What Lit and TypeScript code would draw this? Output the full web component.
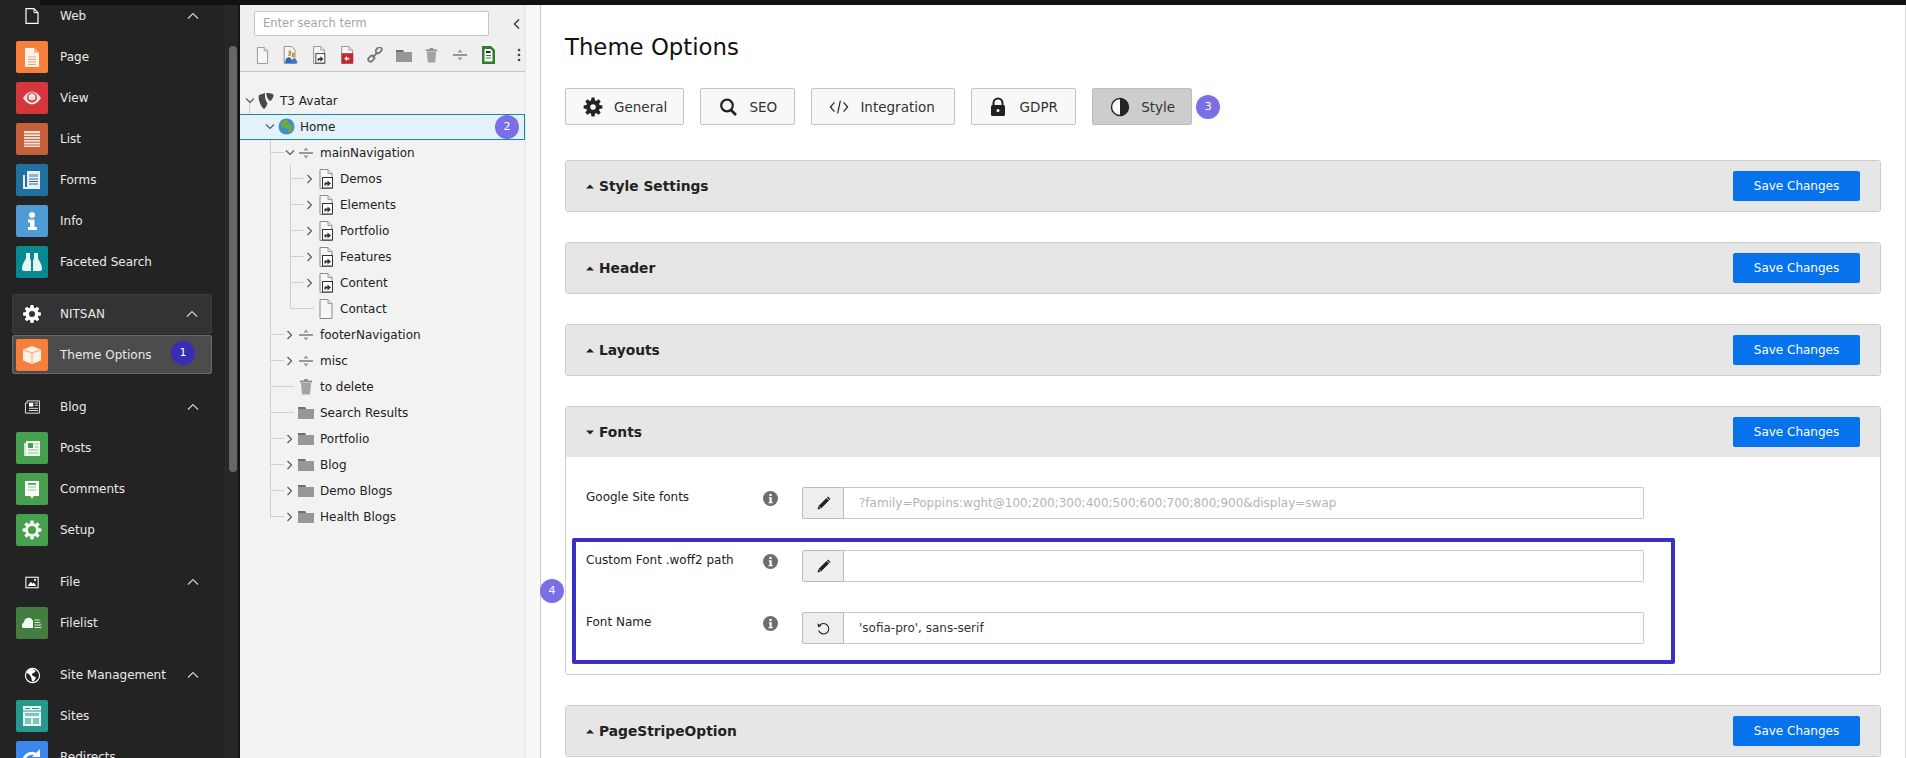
import { LitElement, html, svg, css } from "lit";
import { customElement } from "lit/decorators.js";

function gear(c: number, ro: number, ri: number, hole: number, teeth = 8) {
  let d = "";
  const step = (Math.PI * 2) / teeth;
  for (let i = 0; i < teeth; i++) {
    const a = i * step - step / 2;
    const pts: [number, number][] = [
      [ri, a + step * 0.12],
      [ro, a + step * 0.3],
      [ro, a + step * 0.7],
      [ri, a + step * 0.88],
    ];
    for (const [r, t] of pts) {
      d += `${d ? "L" : "M"}${(c + r * Math.cos(t)).toFixed(2)} ${(c + r * Math.sin(t)).toFixed(2)}`;
    }
  }
  d += "Z";
  d += `M${c - hole} ${c}a${hole} ${hole} 0 1 0 ${hole * 2} 0a${hole} ${hole} 0 1 0 ${-hole * 2} 0Z`;
  return d;
}

const chevUp = html`<svg class="chev" width="12" height="8" viewBox="0 0 12 8"><path d="M1 6.500 6 1.500l5 5" fill="none" stroke="#cfcfcf" stroke-width="1.200"/></svg>`;

// module icons, 32 box with own colour
const modIcons: Record<string, unknown> = {
  page: html`<svg viewBox="0 0 32 32"><rect width="32" height="32" rx="2" fill="#f6803a"/><path d="M9 7h9l5 5v14H9z" fill="#fdf3ea"/><path d="M18 7v5h5z" fill="#f9b68c"/><path d="M12 16h8M12 18.500h8M12 21h8M12 23.500h8" stroke="#f5a26c" stroke-width="1.100"/></svg>`,
  view: html`<svg viewBox="0 0 32 32"><rect width="32" height="32" rx="2" fill="#d5363b"/><path d="M7 16c3-4.500 6-6.500 9-6.500s6 2 9 6.500c-3 4.500-6 6.500-9 6.500S10 20.500 7 16z" fill="#fbe6e6"/><circle cx="16" cy="15.500" r="5" fill="#d5363b"/><circle cx="16" cy="15" r="3.600" fill="#f7dcdc"/></svg>`,
  list: html`<svg viewBox="0 0 32 32"><rect width="32" height="32" rx="2" fill="#c4603a"/><path d="M8 8h16v16H8z" fill="#f7e2d6"/><path d="M8 10.800h16M8 13.600h16M8 16.400h16M8 19.200h16M8 22h16" stroke="#c4603a" stroke-width="1"/></svg>`,
  forms: html`<svg viewBox="0 0 32 32"><rect width="32" height="32" rx="2" fill="#21709f"/><path d="M11 7h13v18H7V11h2v12h2z" fill="#e6f0f6"/><path d="M13 10h9v3h-9z" fill="#8fb6cf"/><path d="M13 15h9M13 17.500h9M13 20h9" stroke="#21709f" stroke-width="1.100"/></svg>`,
  info: html`<svg viewBox="0 0 32 32"><rect width="32" height="32" rx="2" fill="#4f9bd5"/><circle cx="16" cy="10" r="3" fill="#fff"/><path d="M12 14.500h6.500V22H21v3H12v-3h2v-4.500h-2z" fill="#fff"/></svg>`,
  faceted: html`<svg viewBox="0 0 32 32"><rect width="32" height="32" rx="2" fill="#048a90"/><path d="M10 7h4v5l1 3v10H8c-1.500 0-2-1-2-2 0-5 3-8 4-11zM22 7h-4v5l-1 3v10h7c1.500 0 2-1 2-2 0-5-3-8-4-11z" fill="#e8f5f5"/></svg>`,
  theme: html`<svg viewBox="0 0 32 32"><rect width="32" height="32" rx="2" fill="#f6803a"/><path d="M16 7l9 3.500v11L16 25l-9-3.500v-11z" fill="#fdf0e6"/><path d="M7 10.500l9 3.500 9-3.500M16 14v11" stroke="#f6a56f" stroke-width="1" fill="none"/></svg>`,
  posts: html`<svg viewBox="0 0 32 32"><rect width="32" height="32" rx="2" fill="#47a04d"/><path d="M10 9h14v15H10z" fill="#f2f8f2"/><path d="M8 11v13h2V11z" fill="#cfe6d0"/><path d="M12 11h5v5h-5z" fill="#47a04d"/><path d="M18.500 12h4M18.500 15h4M12 18h10.500M12 21h10.500" stroke="#8cc48f" stroke-width="1.100"/></svg>`,
  comments: html`<svg viewBox="0 0 32 32"><rect width="32" height="32" rx="2" fill="#47a04d"/><path d="M9 8h14v15h-5l-2 2.500-2-2.500H9z" fill="#f7fbf7"/><path d="M12 11h8" stroke="#2f5f32" stroke-width="1.200"/><path d="M12 14h8M12 17h8" stroke="#8cc48f" stroke-width="1.100"/></svg>`,
  setup: html`<svg viewBox="0 0 32 32"><rect width="32" height="32" rx="2" fill="#47a04d"/><path fill-rule="evenodd" d="${gear(16, 9.5, 6.8, 4)}" fill="#f2f8f2"/></svg>`,
  filelist: html`<svg viewBox="0 0 32 32"><rect width="32" height="32" rx="2" fill="#437d3f"/><path d="M7 21c-1.500-1-1.500-5 1-5.500 0-3.500 3.500-5.500 6-4.500 1.500.5 2.500 1.500 3 3v7z" fill="#f2f8f2"/><path d="M18.500 13h5M18.500 15.500h6M18.500 18h7M18.500 20.500h7" stroke="#d8ead6" stroke-width="1.100"/></svg>`,
  sites: html`<svg viewBox="0 0 32 32"><rect width="32" height="32" rx="2" fill="#259a8c"/><path d="M7 6h18v20H7z" fill="#eaf6f4"/><path d="M7 11h18" stroke="#259a8c"/><path d="M9 8.500h5M16 8.500h7" stroke="#259a8c" stroke-width="1"/><path d="M9 13h14v3H9zM9 18h6v6H9zM17 18h6v6h-6z" fill="#259a8c" opacity=".55"/></svg>`,
  redirects: html`<svg viewBox="0 0 32 32"><rect width="32" height="32" rx="2" fill="#3a88ef"/><path d="M8 20a8 8 0 0 1 13.500-5.500" stroke="#fff" stroke-width="3" fill="none"/><path d="M24 8v8h-8z" fill="#fff"/></svg>`,
};

const headIcons: Record<string, unknown> = {
  web: html`<svg width="14" height="16" viewBox="0 0 14 16"><path d="M1 .7h8l4 4v10.600H1z" fill="none" stroke="#fff" stroke-width="1.200"/><path d="M9 .7v4h4" fill="none" stroke="#fff" stroke-width="1"/></svg>`,
  nitsan: html`<svg width="20" height="20" viewBox="0 0 20 20"><path fill-rule="evenodd" d="${gear(10, 9, 6.5, 3)}" fill="#fff"/></svg>`,
  blog: html`<svg width="16" height="14" viewBox="0 0 18 16"><path d="M3.500 1h14v14h-16V3.500h2z" fill="none" stroke="#fff" stroke-width="1"/><path d="M5.500 3h5v4.500h-5z" fill="#fff"/><path d="M12 3.500h4M12 6h4M5.500 9.500h10.500M5.500 12h10.500" stroke="#fff"/></svg>`,
  file: html`<svg width="14" height="13" viewBox="0 0 16 14"><rect x="1" y="1" width="14" height="12" fill="none" stroke="#fff" stroke-width="1.200"/><path d="M3 11l3.500-5 2 2.500 1.500-1.500 3 4z" fill="#fff"/><circle cx="11.500" cy="4" r="1.200" fill="#fff"/></svg>`,
  site: html`<svg width="17" height="17" viewBox="0 0 18 18"><circle cx="9" cy="9" r="7.500" fill="none" stroke="#fff" stroke-width="1.200"/><path d="M7 2c-2 1-3.500 2-4 4 1 1 3 1.500 3.500 3 .5 1.500 1.500 2 1.500 4 .5 1.500 1 2.500 1.500 2.500 1.500-1 3-3 3-4.500-1-1-2.500-1-3.500-2s-.5-2 .5-2.500c1-1 2-.5 2.500-1.500C13 4 11 2 7 2z" fill="#fff"/></svg>`,
};

const groups = [
  { name: "Web", icon: "web", items: [["Page", "page"], ["View", "view"], ["List", "list"], ["Forms", "forms"], ["Info", "info"], ["Faceted Search", "faceted"]] },
  { name: "NITSAN", icon: "nitsan", boxed: true, items: [["Theme Options", "theme"]] },
  { name: "Blog", icon: "blog", items: [["Posts", "posts"], ["Comments", "comments"], ["Setup", "setup"]] },
  { name: "File", icon: "file", items: [["Filelist", "filelist"]] },
  { name: "Site Management", icon: "site", items: [["Sites", "sites"], ["Redirects", "redirects"]] },
];

const pageOutline = svg`<path d="M1 .5h8l4 4v15H1z" fill="#f6f6f6" stroke="#8a8a8a" stroke-width="1"/><path d="M9 .5v4h4" fill="#e4e4e4" stroke="#8a8a8a" stroke-width=".8"/>`;
const shortcutBadge = svg`<rect x="3.500" y="8.500" width="10" height="10.500" fill="#fff" stroke="#333"/><path d="M5.500 16.500v-3H8.500V11.500l3.500 3-3.500 3v-2H7v1z" fill="#333"/>`;

const treeIcons: Record<string, unknown> = {
  logo: html`<svg width="20" height="20" viewBox="0 0 20 20"><path d="M3 4 9 2c-.5 3 .5 8 2.500 10.500-1 3-2.500 5-3.500 5.500C5 16 1.500 8 3 4z" fill="#4a4a4a"/><path d="M10.500 2c3 0 6.500 .5 7 2 0 2.500-2 5.500-3.500 6C12 9 10 5 10.500 2z" fill="#4a4a4a"/></svg>`,
  globe: html`<svg width="17" height="17" viewBox="0 0 17 17"><circle cx="8.500" cy="8.500" r="8" fill="#3f8fcf"/><path d="M3 5c2-3 5-4 7-3 1 1-1 2.500 0 3.500s3 0 4.500 2c.5 3-2 6-3.500 7-1.500-1-1-3-2.500-4S5 10 4 9 2.500 6.500 3 5z" fill="#6fa83e"/></svg>`,
  div: html`<svg width="14" height="14" viewBox="0 0 14 14"><path d="M0 7h14" stroke="#666" stroke-width="1.300"/><path d="M4.500 4.500 7 1.500l2.500 3zM4.500 9.500 7 12.500l2.500-3z" fill="#999"/></svg>`,
  shortcut: html`<svg width="14" height="20" viewBox="0 0 14 20">${pageOutline}${shortcutBadge}</svg>`,
  page: html`<svg width="14" height="20" viewBox="0 0 14 20">${pageOutline}</svg>`,
  trash: html`<svg width="14" height="17" viewBox="0 0 14 17"><path d="M2 5h10l-1 11.500H3z" fill="#a3a3a3"/><path d="M1 2.500h12V4.500H1z" fill="#8f8f8f"/><path d="M5 1h4v2H5z" fill="#8f8f8f"/></svg>`,
  folder: html`<svg width="16" height="13" viewBox="0 0 16 13"><path d="M0 1h7l1 2h8v10H0z" fill="#979797"/><path d="M0 1h7l1 2H0z" fill="#6f6f6f"/></svg>`,
};

const tree = [
  ["T3 Avatar", 0, "open", "logo"],
  ["Home", 1, "open", "globe"],
  ["mainNavigation", 2, "open", "div"],
  ["Demos", 3, "closed", "shortcut"],
  ["Elements", 3, "closed", "shortcut"],
  ["Portfolio", 3, "closed", "shortcut"],
  ["Features", 3, "closed", "shortcut"],
  ["Content", 3, "closed", "shortcut"],
  ["Contact", 3, "", "page"],
  ["footerNavigation", 2, "closed", "div"],
  ["misc", 2, "closed", "div"],
  ["to delete", 2, "", "trash"],
  ["Search Results", 2, "", "folder"],
  ["Portfolio", 2, "closed", "folder"],
  ["Blog", 2, "closed", "folder"],
  ["Demo Blogs", 2, "closed", "folder"],
  ["Health Blogs", 2, "closed", "folder"],
] as [string, number, string, string][];

const tools = [
  html`<svg width="13" height="17" viewBox="0 0 14 20">${pageOutline}</svg>`,
  html`<svg width="15" height="18" viewBox="0 0 16 20"><path d="M1 .5h8l4 4v15H1z" fill="#f6f6f6" stroke="#888"/><path d="M6 5v4l-1 2 3 0 1-6zM10 7l-1 5 3 1 1-5z" fill="#c9953f"/><path d="M2 19c0-4 1.500-6.500 4-6.500s3 1.500 3.500 6.500z" fill="#2f66b5"/><path d="M8 19.500c0-3 1.500-5.500 3.500-5.500s4 2 4 5.500z" fill="#3f76c5"/></svg>`,
  html`<svg width="14" height="18" viewBox="0 0 14 20">${pageOutline}${shortcutBadge}</svg>`,
  html`<svg width="14" height="18" viewBox="0 0 14 20">${pageOutline}<rect x="1" y="8" width="13" height="11.500" fill="#c3262e"/><path d="M9.500 13H7v-2l-3 3 3 3v-2h2.500z" fill="#fff"/></svg>`,
  html`<svg width="16" height="16" viewBox="0 0 16 16"><g fill="none" stroke="#777" stroke-width="1.800"><rect x="8.500" y="1" width="6.500" height="4.500" rx="2" transform="rotate(-45 11.700 3.200)"/><rect x="1" y="9.500" width="6.500" height="4.500" rx="2" transform="rotate(-45 4.200 11.700)"/><path d="M5.500 10.500l5-5"/></g></svg>`,
  html`<svg width="16" height="13" viewBox="0 0 16 13"><path d="M0 1h7l1 2h8v10H0z" fill="#979797"/><path d="M0 1h7l1 2H0z" fill="#6f6f6f"/></svg>`,
  html`<svg width="13" height="16" viewBox="0 0 14 17"><path d="M2 5h10l-1 11.500H3z" fill="#a3a3a3"/><path d="M1 2.500h12V4.500H1z" fill="#8f8f8f"/><path d="M5 1h4v2H5z" fill="#8f8f8f"/></svg>`,
  html`<svg width="14" height="14" viewBox="0 0 14 14"><path d="M0 7h14" stroke="#666" stroke-width="1.300"/><path d="M4.500 4.500 7 1.500l2.500 3zM4.500 9.500 7 12.500l2.500-3z" fill="#999"/></svg>`,
  html`<svg width="13" height="18" viewBox="0 0 13 18"><path d="M0 0h9l4 4v14H0z" fill="#2d7d32"/><path d="M2.500 3h6l2 2v10.500h-8z" fill="#fff"/><path d="M4 5h4.500v2H4z" fill="#222"/><path d="M4 9h5v1.100H4zM4 11.500h5v1.100H4z" fill="#2d7d32"/></svg>`,
  html`<svg width="4" height="14" viewBox="0 0 4 14"><circle cx="2" cy="2" r="1.300" fill="#444"/><circle cx="2" cy="7" r="1.300" fill="#444"/><circle cx="2" cy="12" r="1.300" fill="#444"/></svg>`,
];

const tabs = [
  ["General", 119.4, html`<svg width="20" height="20" viewBox="0 0 20 20"><path fill-rule="evenodd" d="${gear(10, 9.5, 6.8, 2.8)}" fill="#222"/></svg>`],
  ["SEO", 95, html`<svg width="20" height="18" viewBox="0 0 20 18"><circle cx="9" cy="7.500" r="5.800" fill="none" stroke="#222" stroke-width="2.200"/><path d="M13 12l5 5" stroke="#222" stroke-width="2.600"/></svg>`],
  ["Integration", 143.2, html`<svg width="22" height="18" viewBox="0 0 22 18"><path d="M6 4 1.500 9 6 14M16 4l4.500 5L16 14M12.500 2l-3 14" fill="none" stroke="#222" stroke-width="1.300"/></svg>`],
  ["GDPR", 105.6, html`<svg width="20" height="20" viewBox="0 0 20 20"><g transform="translate(-3 0)"><path d="M7.500 9V6a4.500 4.500 0 0 1 9 0v3" fill="none" stroke="#222" stroke-width="2"/><rect x="5" y="8" width="14" height="11" rx="1.500" fill="#222"/><circle cx="12" cy="13.500" r="1.500" fill="#fff"/></g></svg>`],
  ["Style", 100, html`<svg width="20" height="20" viewBox="0 0 20 20"><circle cx="10" cy="10" r="8.500" fill="#fff" stroke="#222" stroke-width="1.400"/><path d="M10 1.500a8.500 8.500 0 0 1 0 17z" fill="#222"/></svg>`, true],
] as [string, number, unknown, boolean?][];

const triUp = html`<svg class="tri" width="8" height="5" viewBox="0 0 8 5"><path d="M0 4.500 4 .5l4 4z" fill="#222"/></svg>`;
const triDown = html`<svg class="tri" width="8" height="5" viewBox="0 0 8 5"><path d="M0 .5h8L4 4.500z" fill="#222"/></svg>`;
const info = html`<svg class="info" width="15" height="15" viewBox="0 0 15 15"><circle cx="7.500" cy="7.500" r="7.500" fill="#6d6d6d"/><circle cx="7.500" cy="4" r="1.300" fill="#fff"/><path d="M5.800 6.200h2.900V11h1v1.200H5.600V11h1V7.400h-.8z" fill="#fff"/></svg>`;
const pencil = html`<svg width="15" height="15" viewBox="0 0 15 15"><path d="M10.500 2 13 4.500 5 12.500l-3.500 1 1-3.500z" fill="#222"/><path d="M11.500 1l2.500 2.500" stroke="#222" stroke-width="1.500"/><path d="M3 10.500l2 2" stroke="#fff" stroke-width=".8"/></svg>`;
const undo = html`<svg width="15" height="15" viewBox="0 0 15 15"><path d="M3.500 4.500a5.200 5.200 0 1 1-.8 5" fill="none" stroke="#222" stroke-width="1.100"/><path d="M1.500 2.200l.5 4 3.500-1.200z" fill="#222"/></svg>`;

@customElement("app-root")
export class AppRoot extends LitElement {
  static styles = css`
    :host {
      display: block;
      position: relative;
      width: 1906px;
      height: 758px;
      overflow: hidden;
      font-family: "DejaVu Sans", Verdana, sans-serif;
      background: #fff;
    }
    .topbar {
      position: absolute;
      left: 40px;
      right: 0;
      top: 0;
      height: 5px;
      background: #111;
      z-index: 5;
    }
    .page {
      display: flex;
      height: 758px;
    }

    /* module menu */
    .sidebar {
      width: 240px;
      flex: none;
      display: flex;
      background: #232323;
      color: #e9e9e9;
      overflow: hidden;
    }
    .menu {
      width: 200px;
      margin: -4px 13px 0 12px;
      flex: none;
    }
    .group {
      padding-bottom: 11px;
    }
    .ghead {
      height: 40px;
      display: flex;
      align-items: center;
      padding-left: 4px;
      padding-right: 13px;
      box-sizing: border-box;
      font-size: 12px;
      border-radius: 3px;
    }
    .boxed .ghead {
      background: #333;
      border: 1px solid #3d3d3d;
      padding-left: 3px;
    }
    .hicon {
      width: 32px;
      display: flex;
      justify-content: center;
      margin-right: 12px;
    }
    .chev {
      margin-left: auto;
    }
    .items {
      padding-top: 1px;
    }
    .item {
      height: 39px;
      box-sizing: border-box;
      margin-bottom: 2px;
      padding: 4px 4px 3px;
      display: flex;
      align-items: flex-start;
      gap: 12px;
      font-size: 12px;
      position: relative;
      border-radius: 3px;
    }
    .item span {
      line-height: 32px;
    }
    .item svg {
      width: 32px;
      height: 32px;
      flex: none;
    }
    .item.sel {
      background: #4c4c4c;
      box-shadow: inset 0 0 0 1px #6a6a6a;
    }
    .badge {
      position: absolute;
      width: 24px;
      height: 24px;
      border-radius: 50%;
      background: #7b6fe6;
      color: #fff;
      font-size: 11px;
      line-height: 24px;
      text-align: center;
    }
    .badge.dark {
      background: #3a2db5;
      left: 159px;
      top: 6px;
    }
    .scroll {
      width: 15px;
      padding-top: 46px;
      background: #262626;
      box-sizing: border-box;
      padding-left: 3px;
      border-left: 1px solid #2e2e2e;
      border-right: 2px solid #151515;
    }
    .thumb {
      width: 8px;
      height: 426px;
      border-radius: 4px;
      background: #666;
    }

    /* page tree */
    .treepanel {
      width: 285px;
      flex: none;
      margin-top: 5px;
      background: #f2f2f2;
      border-right: 1px solid #e4e4e4;
      display: flex;
      flex-direction: column;
    }
    .tbar {
      height: 67px;
      flex: none;
      box-sizing: border-box;
      background: #efefef;
      border-bottom: 1px solid #c4c4c4;
      padding: 6px 0 0 14px;
    }
    .searchrow {
      display: flex;
      align-items: center;
      height: 25px;
    }
    .search {
      width: 235px;
      height: 25px;
      box-sizing: border-box;
      background: #fff;
      border: 1px solid #c4c4c4;
      border-radius: 2px;
      padding-left: 8px;
      font-size: 11.500px;
      line-height: 23px;
      color: #a5a5a5;
    }
    .collapse {
      margin-left: 24px;
    }
    .tools {
      display: flex;
      align-items: center;
      margin: 9px 0 0 -6px;
      height: 20px;
    }
    .tool {
      width: 28.300px;
      flex: none;
      display: flex;
      justify-content: center;
    }
    .tool:last-child {
      margin-left: 2px;
    }
    .treebody {
      position: relative;
      padding-top: 15.500px;
      flex: 1;
    }
    .lines {
      position: absolute;
      left: 0;
      top: 0;
      pointer-events: none;
    }
    .row {
      position: relative;
      height: 26px;
      box-sizing: border-box;
      display: flex;
      align-items: center;
      font-size: 12px;
      color: #222;
    }
    .row.sel {
      background: #e3f1f9;
      border-top: 1px solid #1d86a3;
      border-bottom: 1px solid #1d86a3;
      border-right: 1px solid #1d86a3;
      width: 285px;
    }
    .tw {
      width: 13px;
      flex: none;
      display: flex;
      justify-content: center;
    }
    .ti {
      width: 20px;
      flex: none;
      margin-right: 4px;
      display: flex;
      justify-content: center;
      align-items: center;
      height: 20px;
    }
    .badge.tree {
      right: 5px;
      top: 0;
    }

    /* content */
    .gutter {
      width: 14px;
      flex: none;
      margin-top: 5px;
      background: #f8f8f8;
    }
    .main {
      flex: 1;
      margin-top: 5px;
      box-sizing: border-box;
      border-left: 1px solid #c8c8c8;
      border-right: 1px solid #dcdcdc;
      padding: 0 24px;
      min-width: 0;
    }
    h1 {
      margin: 0;
      padding-top: 27px;
      height: 83px;
      box-sizing: border-box;
      font-size: 22.800px;
      line-height: 30px;
      font-weight: 400;
      color: #111;
    }
    .tabs {
      display: flex;
      gap: 16px;
      align-items: center;
      height: 37px;
      margin-bottom: 35px;
      position: relative;
    }
    .tab {
      height: 37px;
      box-sizing: border-box;
      padding-left: 17px;
      display: flex;
      align-items: center;
      font-size: 13.500px;
      color: #333;
      background: #f8f8f8;
      border: 1px solid #c4c4c4;
      border-radius: 2px;
    }
    .tab.on {
      background: #cdcdcd;
      border-color: #bdbdbd;
    }
    .tab .tic {
      width: 20px;
      margin-right: 11px;
      display: flex;
      justify-content: center;
    }
    .badge.tabbadge {
      position: static;
      margin-left: -12px;
    }
    .sec {
      border: 1px solid #ccc;
      border-radius: 3px;
      margin-bottom: 30px;
      background: #fff;
    }
    .shead {
      height: 50px;
      background: #e6e6e6;
      display: flex;
      align-items: center;
      padding: 0 20px;
      font-size: 13.800px;
      font-weight: 700;
      color: #222;
    }
    .tri {
      margin-right: 5px;
    }
    .save {
      margin-left: auto;
      width: 127px;
      height: 30px;
      background: #0672ec;
      color: #fff;
      font-size: 12px;
      font-weight: 400;
      line-height: 30px;
      text-align: center;
      border-radius: 2px;
    }
    .sbody {
      padding: 30px 0 10px 20px;
    }
    .field {
      display: flex;
      height: 32px;
      font-size: 12px;
      color: #222;
    }
    .flabel {
      width: 177px;
      line-height: 20px;
      flex: none;
    }
    .info {
      margin: 4px 24px 0 0;
      flex: none;
    }
    .igroup {
      width: 842px;
      display: flex;
      flex: none;
      height: 32px;
    }
    .ibtn {
      width: 42px;
      flex: none;
      box-sizing: border-box;
      background: #eee;
      border: 1px solid #bbb;
      border-radius: 2px 0 0 2px;
      display: flex;
      align-items: center;
      justify-content: center;
    }
    .iinput {
      flex: 1;
      box-sizing: border-box;
      border: 1px solid #c8c8c8;
      border-left: none;
      border-radius: 0 2px 2px 0;
      padding-left: 15px;
      font-size: 12px;
      line-height: 30px;
      color: #333;
    }
    .iinput.ph {
      color: #b4b4b4;
    }
    .mark {
      position: relative;
      width: fit-content;
      margin: 19px 0 0 -14px;
      padding: 8px 27px 16px 10px;
      border: 4px solid #3a2fc4;
      border-radius: 2px;
    }
    .mark .field + .field {
      margin-top: 30px;
    }
    .badge.four {
      left: -36px;
      top: 37px;
    }
  `;

  renderGroup(g: (typeof groups)[number]) {
    return html`<div class="group ${g.boxed ? "boxed" : ""}">
      <div class="ghead">
        <div class="hicon">${headIcons[g.icon]}</div>
        <span>${g.name}</span>
        ${chevUp}
      </div>
      <div class="items">
        ${g.items.map(
          ([label, icon]) => html`<div class="item ${g.boxed ? "sel" : ""}">
            ${modIcons[icon]}<span>${label}</span>
            ${g.boxed ? html`<div class="badge dark">1</div>` : ""}
          </div>`
        )}
      </div>
    </div>`;
  }

  renderRow([label, depth, state, icon]: [string, number, string, string]) {
    const sel = label === "Home";
    return html`<div class="row ${sel ? "sel" : ""}" style="padding-left:${3 + depth * 20}px">
      <div class="tw">
        ${state === "open"
          ? html`<svg width="10" height="6" viewBox="0 0 10 6"><path d="M1 .5l4 4 4-4" fill="none" stroke="#555" stroke-width="1.100"/></svg>`
          : state === "closed"
            ? html`<svg width="6" height="10" viewBox="0 0 6 10"><path d="M.5 1l4 4-4 4" fill="none" stroke="#555" stroke-width="1.100"/></svg>`
            : ""}
      </div>
      <div class="ti">${treeIcons[icon]}</div>
      <span>${label}</span>
      ${sel ? html`<div class="badge tree">2</div>` : ""}
    </div>`;
  }

  renderSection(title: string, open = false) {
    return html`<div class="shead">${open ? triDown : triUp}<span>${title}</span><div class="save">Save Changes</div></div>`;
  }

  renderField(label: string, icon: unknown, value: string, ph = false) {
    return html`<div class="field">
      <div class="flabel">${label}</div>
      ${info}
      <div class="igroup">
        <div class="ibtn">${icon}</div>
        <div class="iinput ${ph ? "ph" : ""}">${value}</div>
      </div>
    </div>`;
  }

  render() {
    return html`<div class="topbar"></div>
      <div class="page">
        <aside class="sidebar">
          <div class="menu">${groups.map((g) => this.renderGroup(g))}</div>
          <div class="scroll"><div class="thumb"></div></div>
        </aside>
        <section class="treepanel">
          <div class="tbar">
            <div class="searchrow">
              <div class="search">Enter search term</div>
              <svg class="collapse" width="7" height="10" viewBox="0 0 7 10"><path d="M6 .5 1.500 5 6 9.500" fill="none" stroke="#333" stroke-width="1.300"/></svg>
            </div>
            <div class="tools">${tools.map((t) => html`<div class="tool">${t}</div>`)}</div>
          </div>
          <div class="treebody">
            <svg class="lines" width="285" height="460" viewBox="0 0 285 460" fill="none" stroke="#cfcfcf">
              <path d="M9.500 28v26.500H23"/>
              <path d="M30.500 62v384M30.500 80.500H44M30.500 262.500H44M30.500 288.500H44M30.500 314.500H54M30.500 340.500H54M30.500 366.500H44M30.500 392.500H44M30.500 418.500H44M30.500 444.500H44"/>
              <path d="M50.500 92v144.500M50.500 106.500H64M50.500 132.500H64M50.500 158.500H64M50.500 184.500H64M50.500 210.500H64M50.500 236.500H74"/>
            </svg>
            ${tree.map((r) => this.renderRow(r))}
          </div>
        </section>
        <div class="gutter"></div>
        <main class="main">
          <h1>Theme Options</h1>
          <div class="tabs">
            ${tabs.map(
              ([label, w, icon, on]) => html`<div class="tab ${on ? "on" : ""}" style="width:${w}px"><div class="tic">${icon}</div><span>${label}</span></div>`
            )}
            <div class="badge tabbadge">3</div>
          </div>
          <div class="sec">${this.renderSection("Style Settings")}</div>
          <div class="sec">${this.renderSection("Header")}</div>
          <div class="sec">${this.renderSection("Layouts")}</div>
          <div class="sec">
            ${this.renderSection("Fonts", true)}
            <div class="sbody">
              ${this.renderField("Google Site fonts", pencil, "?family=Poppins:wght@100;200;300;400;500;600;700;800;900&display=swap", true)}
              <div class="mark">
                <div class="badge four">4</div>
                ${this.renderField("Custom Font .woff2 path", pencil, "")}
                ${this.renderField("Font Name", undo, "'sofia-pro', sans-serif")}
              </div>
            </div>
          </div>
          <div class="sec">${this.renderSection("PageStripeOption")}</div>
        </main>
      </div>`;
  }
}
